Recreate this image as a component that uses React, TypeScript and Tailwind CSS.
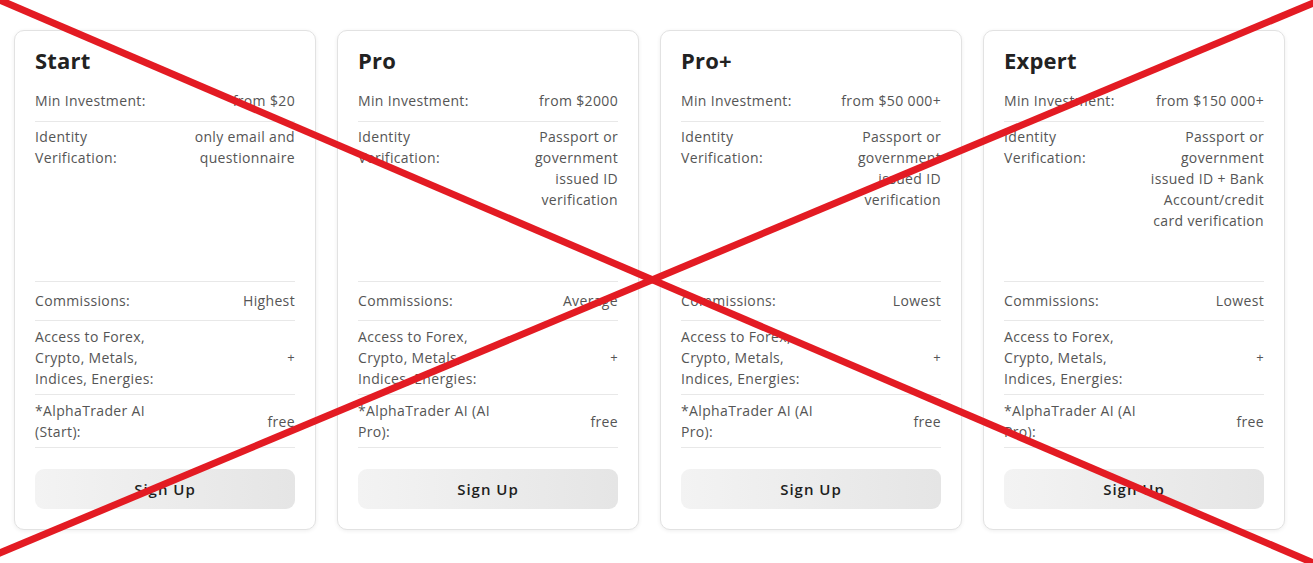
import React from "react";

type Plan = {
  name: string;
  min: string;
  idValue: string[];
  commission: string;
  ai: string[];
};

const plans: Plan[] = [
  {
    name: "Start",
    min: "from $20",
    idValue: ["only email and", "questionnaire"],
    commission: "Highest",
    ai: ["*AlphaTrader AI", "(Start):"],
  },
  {
    name: "Pro",
    min: "from $2000",
    idValue: ["Passport or", "government", "issued ID", "verification"],
    commission: "Average",
    ai: ["*AlphaTrader AI (AI", "Pro):"],
  },
  {
    name: "Pro+",
    min: "from $50 000+",
    idValue: ["Passport or", "government", "issued ID", "verification"],
    commission: "Lowest",
    ai: ["*AlphaTrader AI (AI", "Pro):"],
  },
  {
    name: "Expert",
    min: "from $150 000+",
    idValue: [
      "Passport or",
      "government",
      "issued ID + Bank",
      "Account/credit",
      "card verification",
    ],
    commission: "Lowest",
    ai: ["*AlphaTrader AI (AI", "Pro):"],
  },
];

function Lines({ lines }: { lines: string[] }) {
  return (
    <>
      {lines.map((l, i) => (
        <div key={i} className="whitespace-nowrap">
          {l}
        </div>
      ))}
    </>
  );
}

function Card({ p }: { p: Plan }) {
  return (
    <div className="w-[302px] h-[500px] shrink-0 rounded-[10px] border border-[#e2e2e2] bg-white shadow-[0_1px_4px_rgba(0,0,0,0.07)] px-[20px] pt-[18px] pb-[20px] flex flex-col">
      <div className="text-[22px] leading-[22px] font-bold text-[#222] mb-[10px] tracking-[0.2px]">
        {p.name}
      </div>
      <div className="flex items-center justify-between h-[41px] border-b border-[#e8e8e8]">
        <div>Min Investment:</div>
        <div className="text-right">{p.min}</div>
      </div>
      <div className="flex items-start justify-between h-[160px] pt-[4px] border-b border-[#e8e8e8]">
        <div>
          <Lines lines={["Identity", "Verification:"]} />
        </div>
        <div className="text-right">
          <Lines lines={p.idValue} />
        </div>
      </div>
      <div className="flex items-center justify-between h-[40px] border-b border-[#e8e8e8]">
        <div>Commissions:</div>
        <div className="text-right">{p.commission}</div>
      </div>
      <div className="flex items-center justify-between h-[74px] border-b border-[#e8e8e8]">
        <div>
          <Lines lines={["Access to Forex,", "Crypto, Metals,", "Indices, Energies:"]} />
        </div>
        <div className="text-right text-[13px]">+</div>
      </div>
      <div className="flex items-center justify-between h-[53px] border-b border-[#e8e8e8]">
        <div>
          <Lines lines={p.ai} />
        </div>
        <div className="text-right">free</div>
      </div>
      <div className="mt-[21px] h-[40px] rounded-[9px] bg-gradient-to-r from-[#f3f3f3] to-[#e5e5e5] flex items-center justify-center text-[15px] font-semibold tracking-[1px] text-[#1e1e1e]">
        Sign Up
      </div>
    </div>
  );
}

export default function App() {
  return (
    <div
      className="relative w-[1313px] h-[563px] overflow-hidden bg-white text-[14px] leading-[21px] tracking-[0.35px] text-[#555]"
      style={{ fontFamily: '"Open Sans", "Liberation Sans", sans-serif' }}
    >
      <div className="flex gap-[21px] pl-[14px] pt-[30px]">
        {plans.map((p) => (
          <Card key={p.name} p={p} />
        ))}
      </div>
      <svg
        className="absolute inset-0 pointer-events-none"
        width="1313"
        height="563"
        viewBox="0 0 1313 563"
      >
        <line x1="-5" y1="-2" x2="1318" y2="565" stroke="#e31b23" strokeWidth="7" />
        <line x1="-5" y1="555" x2="1318" y2="1" stroke="#e31b23" strokeWidth="7" />
      </svg>
    </div>
  );
}
